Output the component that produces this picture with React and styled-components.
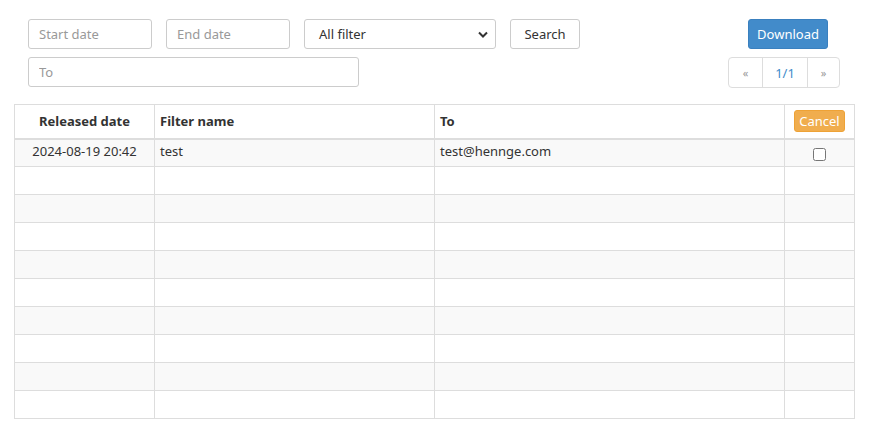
import React from "react";
import styled, { createGlobalStyle } from "styled-components";

const Global = createGlobalStyle`
  html, body { margin: 0; padding: 0; background: #fff; }
  body { font-family: "Noto Sans", "DejaVu Sans", sans-serif; font-size: 13px; color: #333; }
  * { box-sizing: border-box; }
`;

const Page = styled.div`
  width: 869px;
  padding: 19px 14px 0 14px;
`;

const Toolbar = styled.div`
  display: flex;
  justify-content: space-between;
  padding: 0 15px 0 14px;
`;

const LeftCol = styled.div`
  display: flex;
  flex-direction: column;
  gap: 8px;
`;

const Row = styled.div`
  display: flex;
  gap: 14px;
`;

const Input = styled.input`
  width: ${p => p.$w}px;
  height: 30px;
  border: 1px solid #ccc;
  border-radius: 3px;
  padding: 0 10px;
  font: inherit;
  font-size: 13px;
  color: #555;
  &::placeholder { color: #999; }
`;

const SelectWrap = styled.div`
  position: relative;
  width: 192px;
  height: 30px;
  border: 1px solid #ccc;
  border-radius: 3px;
  display: flex;
  align-items: center;
  padding: 0 14px;
  color: #333;
`;

const Chevron = styled.svg`
  position: absolute;
  right: 7px;
  top: 11px;
`;

const Btn = styled.button`
  width: ${p => p.$w}px;
  height: 30px;
  padding: 0;
  margin-right: ${p => p.$mr || 0}px;
  font: inherit;
  font-size: 13px;
  border-radius: 3px;
  border: 1px solid ${p => (p.$primary ? "#3a80bf" : "#ccc")};
  background: ${p => (p.$primary ? "#428bca" : "#fff")};
  color: ${p => (p.$primary ? "#fff" : "#333")};
`;

const RightCol = styled.div`
  display: flex;
  flex-direction: column;
  align-items: flex-end;
  gap: 8px;
`;

const Pager = styled.div`
  display: flex;
  height: 31px;
  border: 1px solid #ddd;
  border-radius: 4px;
`;

const PageCell = styled.div`
  width: ${p => p.$w}px;
  display: flex;
  align-items: center;
  justify-content: center;
  color: ${p => (p.$muted ? "#999" : "#428bca")};
  font-size: ${p => (p.$muted ? "11px" : "13px")};
  & + & { border-left: 1px solid #ddd; }
`;

const Table = styled.table`
  margin-top: 16px;
  width: 841px;
  border-collapse: collapse;
  border: 1px solid #ddd;
`;

const Th = styled.th`
  border: 1px solid #ddd;
  border-bottom: 2px solid #ddd;
  height: 34px;
  padding: 4px 5px;
  text-align: ${p => p.$align || "left"};
  font-weight: bold;
  color: #333;
  width: ${p => p.$w}px;
`;

const Tr = styled.tr`
  background: ${p => (p.$odd ? "#f9f9f9" : "#fff")};
`;

const Td = styled.td`
  border: 1px solid #ddd;
  height: 28px;
  padding: 2px 5px 4px;
  vertical-align: top;
  text-align: ${p => p.$align || "left"};
  color: #333;
  line-height: 18px;
`;

const CancelBtn = styled.button`
  background: #f0ad4e;
  border: 1px solid #eea236;
  color: #fff;
  border-radius: 3px;
  font: inherit;
  font-weight: normal;
  font-size: 13px;
  height: 22px;
  width: 51px;
  padding: 0;
  line-height: 18px;
  margin-right: 4px;
`;

const Check = styled.input`
  display: block;
  margin: 6px auto 0;
  width: 13px;
  height: 13px;
`;

export default function App() {
  const rows = Array.from({ length: 10 }, (_, i) => i);
  return (
    <Page>
      <Global />
      <Toolbar>
        <LeftCol>
          <Row>
            <Input $w={124} placeholder="Start date" />
            <Input $w={124} placeholder="End date" />
            <SelectWrap>
              All filter
              <Chevron width="10" height="7" viewBox="0 0 10 7">
                <path d="M1 1.5 L5 5.5 L9 1.5" fill="none" stroke="#333" strokeWidth="2" />
              </Chevron>
            </SelectWrap>
            <Btn $w={70}>Search</Btn>
          </Row>
          <Row>
            <Input $w={331} placeholder="To" />
          </Row>
        </LeftCol>
        <RightCol>
          <Btn $primary $w={80} $mr={12}>Download</Btn>
          <Pager>
            <PageCell $w={33} $muted>«</PageCell>
            <PageCell $w={45}>1/1</PageCell>
            <PageCell $w={32} $muted>»</PageCell>
          </Pager>
        </RightCol>
      </Toolbar>
      <Table>
        <thead>
          <tr>
            <Th $w={140} $align="center">Released date</Th>
            <Th $w={280}>Filter name</Th>
            <Th $w={350}>To</Th>
            <Th $w={70} $align="right"><CancelBtn>Cancel</CancelBtn></Th>
          </tr>
        </thead>
        <tbody>
          {rows.map(i => (
            <Tr key={i} $odd={i % 2 === 0}>
              <Td $align="center">{i === 0 ? "2024-08-19 20:42" : ""}</Td>
              <Td>{i === 0 ? "test" : ""}</Td>
              <Td>{i === 0 ? "test@hennge.com" : ""}</Td>
              <Td $align="center">{i === 0 ? <Check type="checkbox" /> : ""}</Td>
            </Tr>
          ))}
        </tbody>
      </Table>
    </Page>
  );
}
